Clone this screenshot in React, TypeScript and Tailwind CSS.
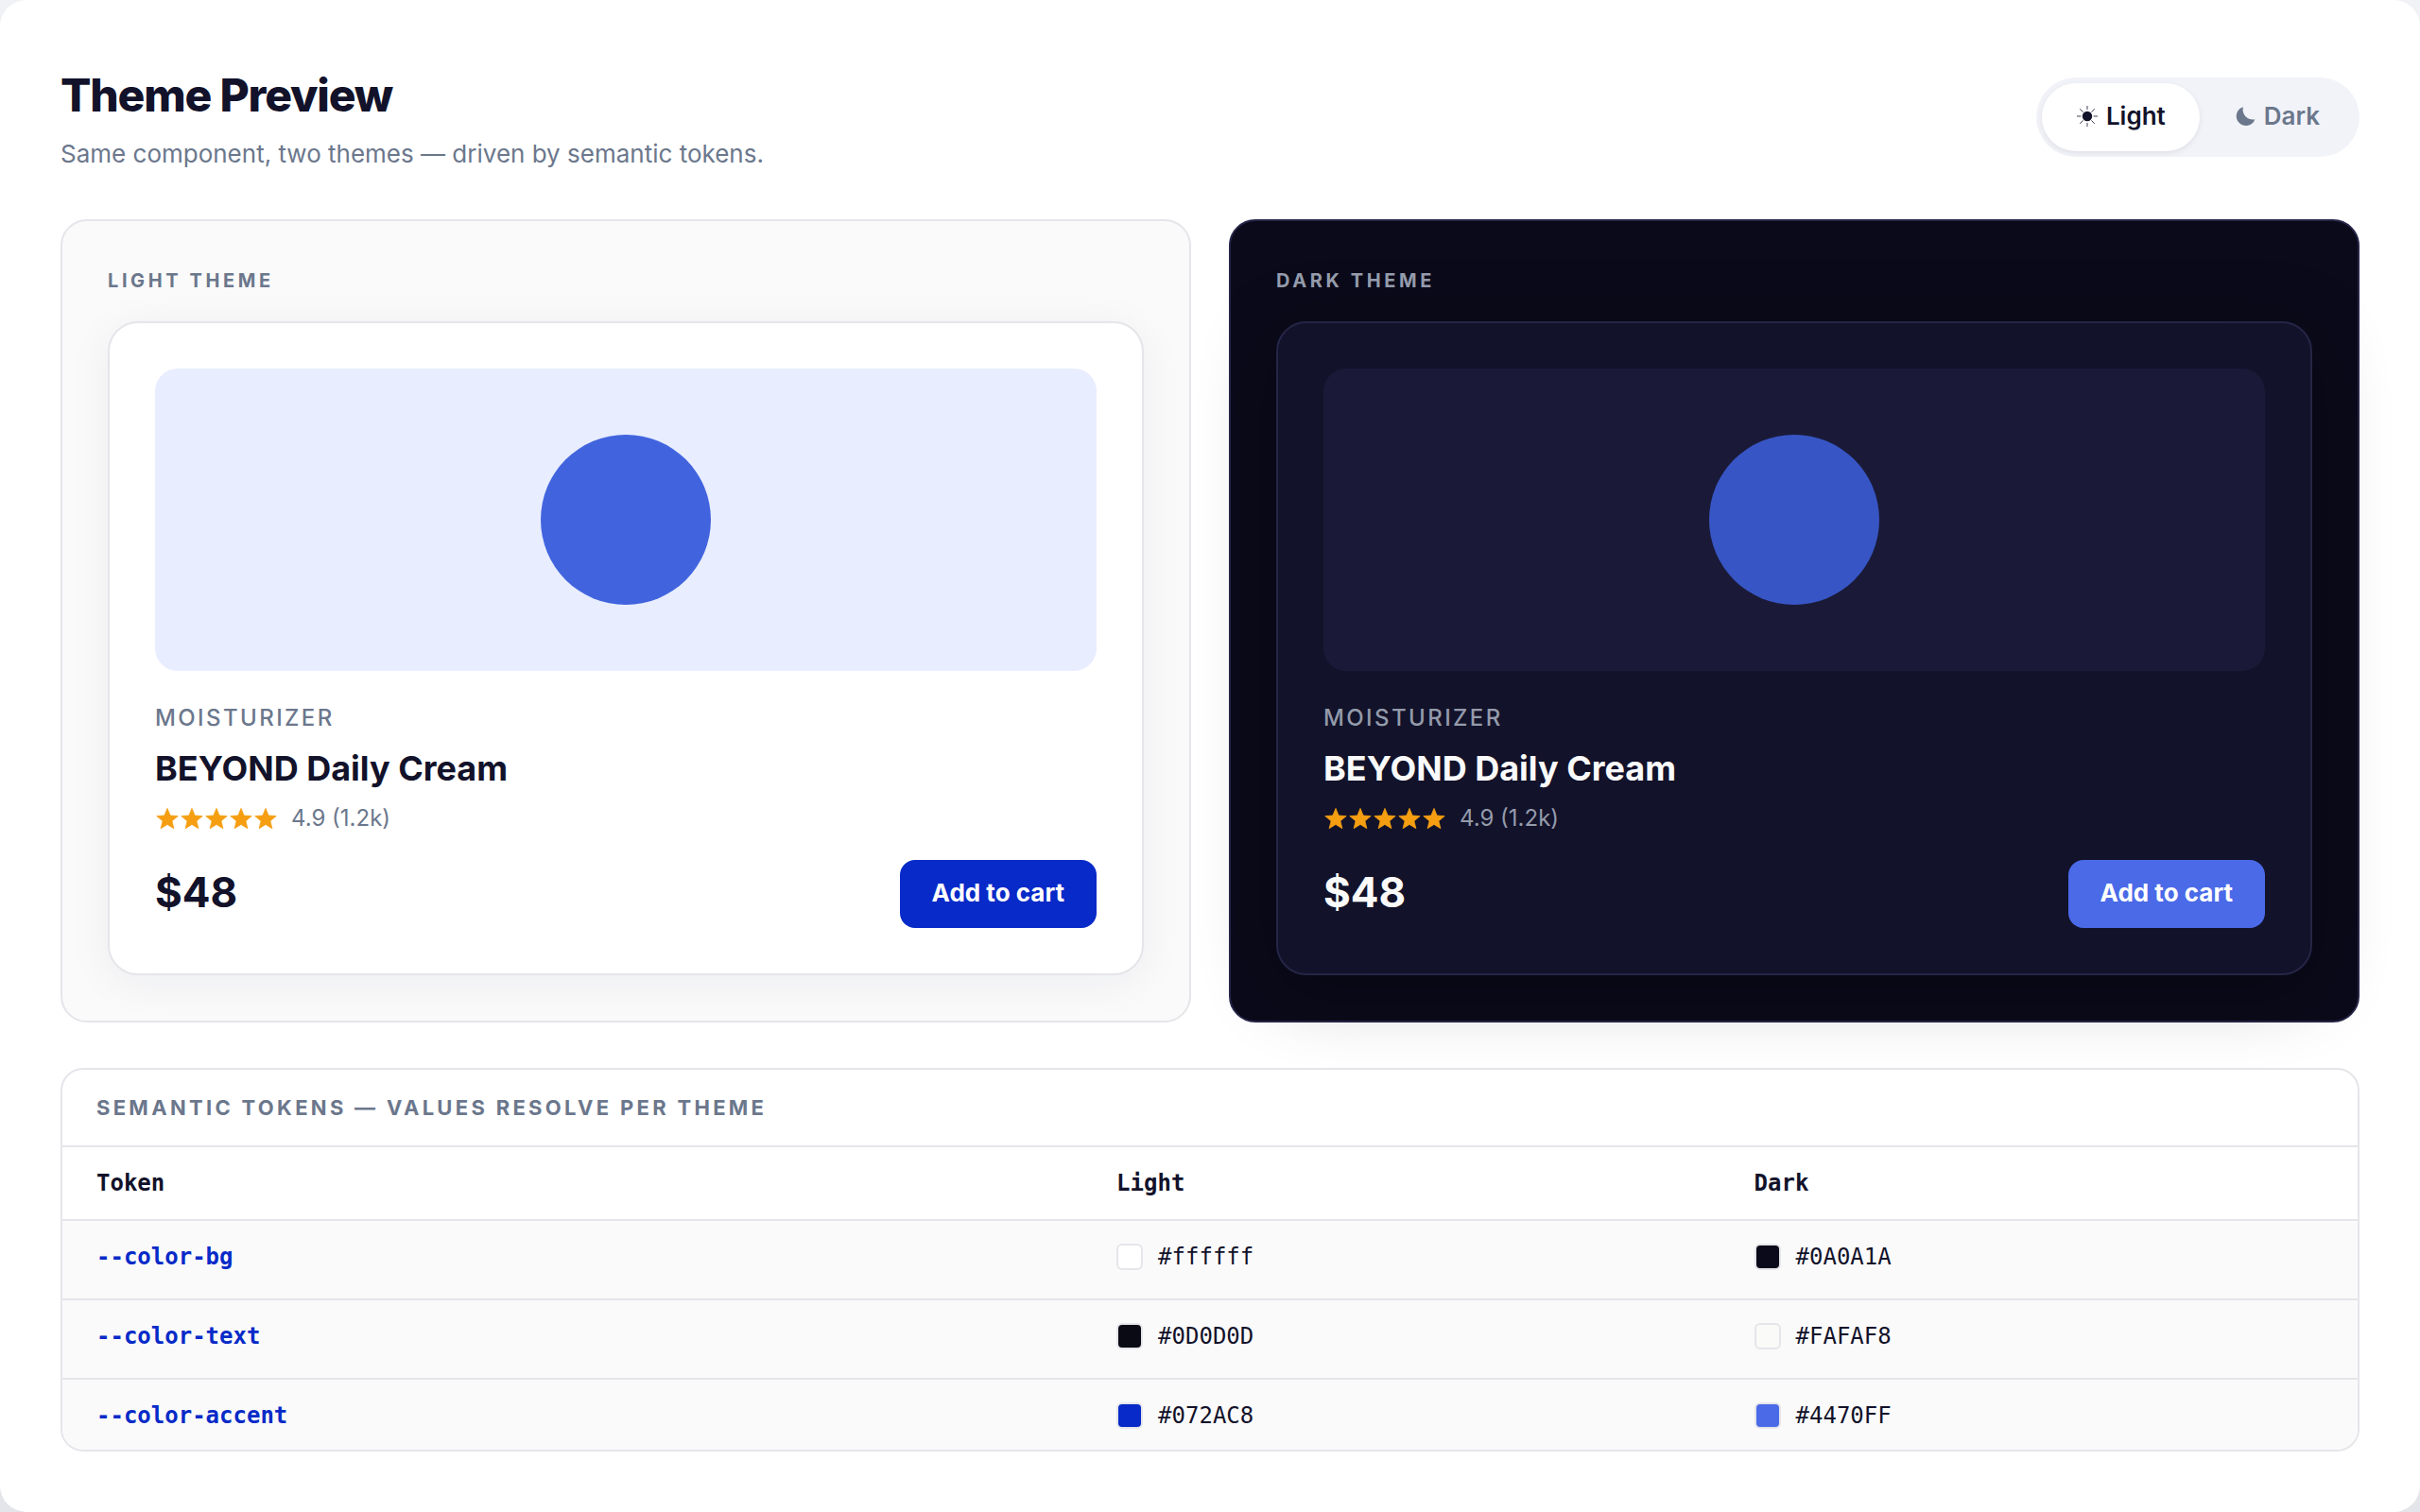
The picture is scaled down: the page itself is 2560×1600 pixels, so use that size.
import React, { useState } from "react";
import clsx from "clsx";

type Theme = "light" | "dark";

const tokens = [
  { name: "--color-bg", light: "#ffffff", dark: "#0A0A1A", lightSwatch: "bg-white", darkSwatch: "bg-[#0a0a1a]" },
  { name: "--color-text", light: "#0D0D0D", dark: "#FAFAF8", lightSwatch: "bg-[#0a0a14]", darkSwatch: "bg-[#fafaf8]" },
  { name: "--color-accent", light: "#072AC8", dark: "#4470FF", lightSwatch: "bg-[#072ac8]", darkSwatch: "bg-[#4a6ae8]" },
];

const SunIcon = () => (
  <svg viewBox="0 0 24 24" className="size-6" aria-hidden="true">
    <circle cx="12" cy="12" r="5.2" fill="currentColor" />
    <path
      d="M12 1v4M12 19v4M1 12h4.4M18.6 12H23M4.2 4.2l3.4 3.4M16.4 16.4l3.4 3.4M4.2 19.8l3.4-3.4M16.4 7.6l3.4-3.4"
      stroke="currentColor"
      strokeWidth="0.8"
      fill="none"
    />
  </svg>
);

const MoonIcon = () => (
  <svg viewBox="0 0 24 24" className="size-6" aria-hidden="true">
    <path d="M10 2.2A10.1 10.1 0 1 0 22.4 15.2 10.4 10.4 0 0 1 10 2.2z" fill="currentColor" />
  </svg>
);

const Star = () => (
  <svg viewBox="0 0 26 26" className="size-[26px]" aria-hidden="true">
    <path
      d="M13 2.4l3.1 7.6 8.1.6-6.3 5.2 2 7.9-6.9-4.3-6.9 4.3 2-7.9-6.3-5.2 8.1-.6z"
      fill="#f59e12"
      stroke="#f59e12"
      strokeWidth="0.8"
      strokeLinejoin="round"
    />
  </svg>
);

const ThemeToggle: React.FC = () => {
  const [theme, setTheme] = useState<Theme>("light");

  const tab = (value: Theme) =>
    clsx(
      "flex h-[72px] items-center gap-2 rounded-full px-9 pb-0.5 text-[26px] leading-9 font-semibold",
      theme === value ? "bg-white text-[#12122a] shadow-[0_2px_6px_rgba(0,0,0,0.08)]" : "text-[#6b778c]"
    );

  return (
    <div className="flex rounded-full bg-[#f2f3f9] p-1.5">
      <button type="button" aria-pressed={theme === "light"} onClick={() => setTheme("light")} className={tab("light")}>
        <SunIcon />
        Light
      </button>
      <button type="button" aria-pressed={theme === "dark"} onClick={() => setTheme("dark")} className={tab("dark")}>
        <MoonIcon />
        Dark
      </button>
    </div>
  );
};

const ThemePanel: React.FC<{ theme: Theme }> = ({ theme }) => {
  const dark = theme === "dark";
  const muted = dark ? "text-[#949bab]" : "text-[#6b778c]";
  const strong = dark ? "text-[#fafafa]" : "text-[#12122a]";

  return (
    <section
      className={clsx(
        "rounded-[28px] border-2 p-12",
        dark ? "border-[#252547] bg-[#0a0a1a]" : "border-[#e5e5ea] bg-[#fafafa]"
      )}
    >
      <h2 className={clsx("mb-7 text-[20px] leading-[30px] font-bold tracking-[0.18em] uppercase", muted)}>
        {dark ? "Dark theme" : "Light theme"}
      </h2>

      <article
        className={clsx(
          "rounded-[32px] border-2 p-12",
          dark
            ? "border-[#252547] bg-[#12122a] shadow-[0_16px_80px_rgba(0,0,0,0.3)]"
            : "border-[#e5e5ea] bg-white shadow-[0_8px_48px_rgba(13,40,82,0.06)]"
        )}
      >
        <div
          className={clsx(
            "flex h-80 items-center justify-center rounded-3xl",
            dark ? "bg-[#1a1a38]" : "bg-[#e8edff]"
          )}
        >
          <div className={clsx("size-[180px] rounded-full", dark ? "bg-[#3755c4]" : "bg-[#4164de]")} />
        </div>

        <p className={clsx("mt-8 text-[24px] leading-9 font-medium tracking-[0.1em] uppercase", muted)}>
          Moisturizer
        </p>
        <h3 className={clsx("mt-2 text-[36px] leading-[54px] font-bold", strong)}>BEYOND Daily Cream</h3>
        <div className="mt-2 flex items-center gap-3.5 text-[24px] leading-9">
          <div className="flex" role="img" aria-label="5 stars">
            <Star />
            <Star />
            <Star />
            <Star />
            <Star />
          </div>
          <span className={muted}>4.9 (1.2k)</span>
        </div>

        <div className="mt-[26px] flex items-center justify-between">
          <span className={clsx("pb-1 text-[44px] leading-[66px] font-bold", strong)}>$48</span>
          <button
            type="button"
            className={clsx(
              "h-[72px] rounded-2xl px-[34px] pb-0.5 text-[26px] leading-9 font-bold text-white",
              dark ? "bg-[#4a6ae8]" : "bg-[#072ac8]"
            )}
          >
            Add to cart
          </button>
        </div>
      </article>
    </section>
  );
};

const ColorValue: React.FC<{ value: string; swatch: string }> = ({ value, swatch }) => (
  <div className="flex items-center gap-4">
    <span className={clsx("size-7 rounded-md border-2 border-[#e5e5ea]", swatch)} />
    {value}
  </div>
);

const TokenTable: React.FC = () => (
  <section className="min-h-0 flex-1 overflow-hidden rounded-3xl border-2 border-[#e5e5ea]">
    <h2 className="border-b-2 border-[#e5e5ea] px-9 py-6 text-[22px] leading-8 font-bold tracking-[0.15em] text-[#6b778c] uppercase">
      Semantic tokens — values resolve per theme
    </h2>
    <table className="w-full table-fixed text-left font-['DejaVu_Sans_Mono',monospace] text-[24px] leading-9 text-[#12122a]">
      <thead>
        <tr className="border-b-2 border-[#e5e5ea]">
          <th className="w-4/9 px-9 py-5 font-bold">Token</th>
          <th className="px-9 py-5 font-bold">Light</th>
          <th className="px-9 py-5 font-bold">Dark</th>
        </tr>
      </thead>
      <tbody className="bg-[#fafafa]">
        {tokens.map((token) => (
          <tr key={token.name} className="border-b-2 border-[#e5e5ea]">
            <td className="px-9 pt-5 pb-[26px] font-bold text-[#072ac8]">{token.name}</td>
            <td className="px-9 pt-5 pb-[26px]">
              <ColorValue value={token.light} swatch={token.lightSwatch} />
            </td>
            <td className="px-9 pt-5 pb-[26px]">
              <ColorValue value={token.dark} swatch={token.darkSwatch} />
            </td>
          </tr>
        ))}
      </tbody>
    </table>
  </section>
);

const App: React.FC = () => {
  return (
    <div className="h-screen bg-linear-to-b from-[#f1f2f5] to-[#e4e5ea] font-['Inter',sans-serif]">
      <main className="flex h-full flex-col gap-12 rounded-[28px] bg-white p-16">
        <header className="flex items-center justify-between">
          <div>
            <h1 className="text-[48px] leading-[74px] font-extrabold tracking-tight text-[#12122a]">Theme Preview</h1>
            <p className="mt-1 text-[26px] leading-[42px] text-[#6b778c]">
              Same component, two themes — driven by semantic tokens.
            </p>
          </div>
          <ThemeToggle />
        </header>

        <div className="grid grid-cols-2 gap-10">
          <ThemePanel theme="light" />
          <ThemePanel theme="dark" />
        </div>

        <TokenTable />
      </main>
    </div>
  );
};

export default App;
